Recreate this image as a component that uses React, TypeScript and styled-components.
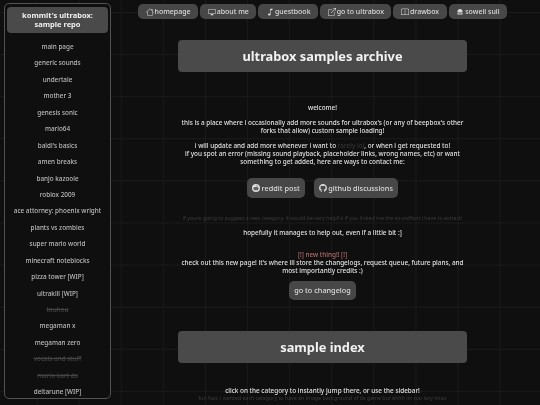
import styled, { createGlobalStyle } from "styled-components";
import { BsBook, BsBoxArrowUpRight, BsDisplay, BsGithub, BsHouse, BsMusicNote, BsReddit } from "react-icons/bs";

const GlobalStyle = createGlobalStyle`
  html, body {
    margin: 0;
    height: 405px;
    overflow: hidden;
    background: #0f0f0f;
    color: #d6d6d6;
    font-family: "Noto Sans", "Open Sans", sans-serif;
  }
`;

const Page = styled.div`
  display: grid;
  grid-template-columns: 107px 1fr;
  column-gap: 24px;
  height: 405px;
  padding: 3px 0 6px 4px;
  box-sizing: border-box;
  overflow: hidden;
  filter: blur(0.3px);
  background-color: #0f0f0f;
  background-image:
    linear-gradient(#1a1a1a 1px, transparent 1px),
    linear-gradient(90deg, #1a1a1a 1px, transparent 1px);
  background-size: 42.1px 42.1px;
  background-position: 36.6px 12px;
`;

const Sidebar = styled.aside`
  display: flex;
  flex-direction: column;
  height: 396px;
  box-sizing: border-box;
  padding: 3px 2px;
  background: #0f0f0f;
  border: 1px solid #525252;
  border-radius: 5px;
  overflow: hidden;
`;

const SideHeader = styled.div`
  padding: 4px 0;
  margin-bottom: 6px;
  background: #4a4a4a;
  border-radius: 4px;
  color: #f0f0f0;
  font-size: 7.5px;
  font-weight: 700;
  line-height: 9px;
  text-align: center;
`;

const SideItem = styled.a<{ $faded?: boolean }>`
  display: block;
  height: 16.45px;
  line-height: 16.45px;
  color: ${(p) => (p.$faded ? "#444" : "#bcbcbc")};
  font-size: 6.35px;
  font-weight: 500;
  text-align: center;
  white-space: nowrap;
  text-decoration: ${(p) => (p.$faded ? "line-through" : "none")};
`;

const Main = styled.main`
  width: 375px;
  display: flex;
  flex-direction: column;
  align-items: center;
`;

const Nav = styled.nav`
  display: flex;
  gap: 2px;
  align-self: flex-start;
  margin: 1px 0 0 3px;
`;

const NavLink = styled.a`
  display: flex;
  align-items: center;
  gap: 1px;
  height: 15px;
  padding: 0 7.55px;
  background: #474747;
  border-radius: 5px;
  color: #dcdcdc;
  font-size: 7px;
  font-weight: 500;
  white-space: nowrap;
  svg {
    width: 8px;
    height: 8px;
  }
`;

const Banner = styled.h1<{ $top: number }>`
  width: 289px;
  height: 32px;
  margin: ${(p) => p.$top}px 0 0;
  flex-shrink: 0;
  display: flex;
  align-items: center;
  justify-content: center;
  background: #4a4a4a;
  border-radius: 4px;
  color: #f2f2f2;
  font-size: 12.8px;
  font-weight: 700;
`;

const Intro = styled.section`
  margin-top: 32px;
  width: 300px;
  display: flex;
  flex-direction: column;
  align-items: center;
`;

const Text = styled.p<{ $gap?: number }>`
  margin: ${(p) => p.$gap ?? 0}px 0 0;
  font-size: 6.38px;
  font-weight: 500;
  line-height: 8px;
  text-align: center;
  color: #e0e0e0;
  white-space: nowrap;
`;

const Faint = styled.span`
  color: #333;
`;

const Dim = styled.p<{ $gap?: number }>`
  margin: ${(p) => p.$gap ?? 0}px 0 0;
  font-size: 5.25px;
  line-height: 7px;
  text-align: center;
  white-space: nowrap;
  color: #3c3c3c;
`;

const Alert = styled.span`
  display: block;
  color: #b56b6b;
`;

const ButtonRow = styled.div<{ $gap: number }>`
  display: flex;
  justify-content: center;
  gap: 9px;
  margin-top: ${(p) => p.$gap}px;
`;

const ActionButton = styled.a`
  display: flex;
  align-items: center;
  gap: 1.5px;
  height: 19.5px;
  padding: 0 5px;
  background: #474747;
  border-radius: 5px;
  color: #dcdcdc;
  font-size: 7.3px;
  font-weight: 500;
  white-space: nowrap;
  svg {
    width: 8px;
    height: 8px;
  }
`;

const HatIcon = () => (
  <svg viewBox="0 0 16 16" fill="currentColor">
    <path d="M3 7a5 5 0 0 1 10 0v1H3V7z" />
    <path d="M3 9.2h10V13H3V9.2zm2 1.3v1.2h6v-1.2H5z" fillRule="evenodd" />
  </svg>
);

const navLinks = [
  { label: "homepage", Icon: BsHouse },
  { label: "about me", Icon: BsDisplay },
  { label: "guestbook", Icon: BsMusicNote },
  { label: "go to ultrabox", Icon: BsBoxArrowUpRight },
  { label: "drawbox", Icon: BsBook },
  { label: "soweli suli", Icon: HatIcon },
];

const sideItems = [
  { label: "main page" },
  { label: "generic sounds" },
  { label: "undertale" },
  { label: "mother 3" },
  { label: "genesis sonic" },
  { label: "mario64" },
  { label: "baldi's basics" },
  { label: "amen breaks" },
  { label: "banjo kazooie" },
  { label: "roblox 2009" },
  { label: "ace attorney: phoenix wright" },
  { label: "plants vs zombies" },
  { label: "super mario world" },
  { label: "minecraft noteblocks" },
  { label: "pizza tower [WIP]" },
  { label: "ultrakill [WIP]" },
  { label: "touhou", faded: true },
  { label: "megaman x" },
  { label: "megaman zero" },
  { label: "vocals and stuff", faded: true },
  { label: "mario kart ds", faded: true },
  { label: "deltarune [WIP]" },
];

export default function App() {
  return (
    <Page>
      <GlobalStyle />
      <Sidebar>
        <SideHeader>
          kommit's ultrabox:
          <br />
          sample repo
        </SideHeader>
        {sideItems.map((item) => (
          <SideItem key={item.label} $faded={item.faded}>
            {item.label}
          </SideItem>
        ))}
      </Sidebar>
      <Main>
        <Nav>
          {navLinks.map(({ label, Icon }) => (
            <NavLink key={label}>
              <Icon />
              {label}
            </NavLink>
          ))}
        </Nav>
        <Banner $top={21}>ultrabox samples archive</Banner>
        <Intro>
          <Text>welcome!</Text>
          <Text $gap={7}>
            this is a place where i occasionally add more sounds for ultrabox's (or any of beepbox's other
            <br />
            forks that allow) custom sample loading!
          </Text>
          <Text $gap={7}>
            i will update and add more whenever i want to <Faint>rarely lol</Faint>, or when i get requested to!
            <br />
            if you spot an error (missing sound playback, placeholder links, wrong names, etc) or want
            <br />
            something to get added, here are ways to contact me:
          </Text>
          <ButtonRow $gap={12}>
            <ActionButton>
              <BsReddit />
              reddit post
            </ActionButton>
            <ActionButton>
              <BsGithub />
              github discussions
            </ActionButton>
          </ButtonRow>
          <Dim $gap={17}>if youre going to suggest a new category, it would be very helpful if you linked me the soundfont i have to extract!</Dim>
          <Text $gap={7}>hopefully it manages to help out, even if a little bit :]</Text>
          <Text $gap={14}>
            <Alert>[!] new thing!! [!]</Alert>
            check out this new page! it's where ill store the changelogs, request queue, future plans, and
            <br />
            most importantly credits :)
          </Text>
          <ButtonRow $gap={6}>
            <ActionButton>go to changelog</ActionButton>
          </ButtonRow>
        </Intro>
        <Banner $top={31}>sample index</Banner>
        <Text $gap={24}>click on the category to instantly jump there, or use the sidebar!</Text>
        <Dim>fun fact: i wanted each category to have an image background of its game but ehhh im too lazy lmao</Dim>
      </Main>
    </Page>
  );
}
